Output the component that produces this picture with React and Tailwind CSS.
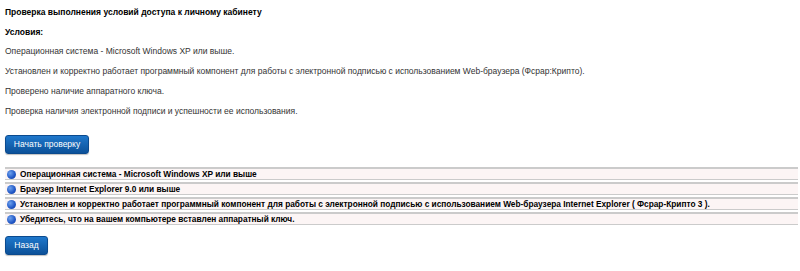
import React from 'react';

const rows = [
  'Операционная система - Microsoft Windows XP или выше',
  'Браузер Internet Explorer 9.0 или выше',
  'Установлен и корректно работает программный компонент для работы с электронной подписью с использованием Web-браузера Internet Explorer ( Фсрар-Крипто 3 ).',
  'Убедитесь, что на вашем компьютере вставлен аппаратный ключ.',
];

const conditions = [
  'Операционная система - Microsoft Windows XP или выше.',
  'Установлен и корректно работает программный компонент для работы с электронной подписью с использованием Web-браузера (Фсрар:Крипто).',
  'Проверено наличие аппаратного ключа.',
  'Проверка наличия электронной подписи и успешности ее использования.',
];

const Bullet = () => (
  <span className="inline-block w-[9px] h-[9px] rounded-full bg-[radial-gradient(circle_at_35%_35%,#6ea2ee,#1f55c4_60%,#153f9a)] shrink-0" />
);

const BlueButton = ({ children, className }) => (
  <button
    type="button"
    className={`h-[19px] rounded-[3px] bg-gradient-to-b from-[#1f78cc] to-[#0c5199] border border-[#0b4a8e] text-white text-[8.5px] leading-none shadow-[0_1px_1px_rgba(0,0,0,0.25)] ${className}`}
  >
    {children}
  </button>
);

const App = () => {
  return (
    <div className="w-[800px] h-[271px] bg-white pl-[5px] pr-[2px] pt-[6px] text-[8.5px] leading-[13px] text-black font-['Liberation_Sans',Arial,sans-serif]">
      <h1 className="font-bold">Проверка выполнения условий доступа к личному кабинету</h1>
      <h2 className="font-bold mt-[7px]">Условия:</h2>

      <div className="mt-[6px] flex flex-col gap-[7px] text-[#333]">
        {conditions.map((c) => (
          <p key={c}>{c}</p>
        ))}
      </div>

      <div className="mt-[17px]">
        <BlueButton className="w-[84px]">Начать проверку</BlueButton>
      </div>

      <div className="mt-[13px] flex flex-col gap-[2px]">
        {rows.map((r) => (
          <div
            key={r}
            className="h-[13px] flex items-center gap-[4px] pl-[2px] border-t-2 border-b border-[#cbcbcb] bg-[#fcf5f5] font-bold text-[8.3px] leading-[11px]"
          >
            <Bullet />
            <span>{r}</span>
          </div>
        ))}
      </div>

      <div className="mt-[11px]">
        <BlueButton className="w-[43px]">Назад</BlueButton>
      </div>
    </div>
  );
};

export default App;
